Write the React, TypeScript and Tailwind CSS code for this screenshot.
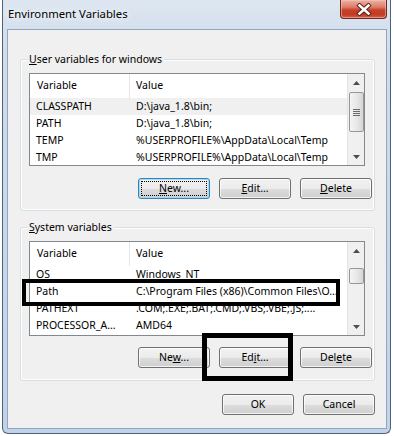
import type { ReactNode } from 'react';

type Row = { name: string; value: string };

const userRows: Row[] = [
  { name: 'CLASSPATH', value: 'D:\\java_1.8\\bin;' },
  { name: 'PATH', value: 'D:\\java_1.8\\bin;' },
  { name: 'TEMP', value: '%USERPROFILE%\\AppData\\Local\\Temp' },
  { name: 'TMP', value: '%USERPROFILE%\\AppData\\Local\\Temp' },
];

const systemRows: Row[] = [
  { name: 'OS', value: 'Windows_NT' },
  { name: 'Path', value: 'C:\\Program Files (x86)\\Common Files\\O...' },
  { name: 'PATHEXT', value: '.COM;.EXE;.BAT;.CMD;.VBS;.VBE;.JS;....' },
  { name: 'PROCESSOR_A...', value: 'AMD64' },
];

function WinButton({ children, focused }: { children: ReactNode; focused?: boolean }) {
  return (
    <div
      className={`relative flex h-[21px] w-[72px] items-center justify-center rounded-[3px] border bg-[linear-gradient(180deg,#f2f2f2_0%,#ebebeb_50%,#dddddd_51%,#cfcfcf_100%)] text-black ${
        focused
          ? 'border-[#3c7fb1] shadow-[inset_0_0_0_1px_#9fdcf7]'
          : 'border-[#707070] shadow-[inset_0_0_0_1px_rgba(255,255,255,0.75)]'
      }`}
    >
      {focused && <div className="absolute inset-[2px] border border-dotted border-black" />}
      <span className="relative">{children}</span>
    </div>
  );
}

function U({ children }: { children: ReactNode }) {
  return <span className="underline underline-offset-[1px]">{children}</span>;
}

function Arrow({ up }: { up?: boolean }) {
  return (
    <div className="flex h-[17px] items-center justify-center">
      <svg width="7" height="4" viewBox="0 0 7 4">
        <path d={up ? 'M0 4 L3.5 0 L7 4 Z' : 'M0 0 L3.5 4 L7 0 Z'} fill="#4d4d4d" />
      </svg>
    </div>
  );
}

function ScrollBar({ thumbClass, grip }: { thumbClass: string; grip?: boolean }) {
  return (
    <div className="flex w-[17px] flex-col border-l border-[#e3e3e3] bg-[#f0f0f0]">
      <Arrow up />
      <div className="flex-1">
        <div
          className={`mx-auto flex w-[15px] items-center justify-center rounded-[2px] border border-[#979797] bg-gradient-to-r from-[#f4f4f4] via-[#e8e8e8] to-[#d6d6d6] ${thumbClass}`}
        >
          {grip && (
            <div className="flex flex-col gap-[1px]">
              <div className="h-[1px] w-[7px] bg-[#6b6b6b]" />
              <div className="h-[1px] w-[7px] bg-[#6b6b6b]" />
              <div className="h-[1px] w-[7px] bg-[#6b6b6b]" />
              <div className="h-[1px] w-[7px] bg-[#6b6b6b]" />
            </div>
          )}
        </div>
      </div>
      <Arrow />
    </div>
  );
}

function ListView({
  rows,
  selected,
  heightClass,
  thumbClass,
  grip,
}: {
  rows: Row[];
  selected?: number;
  heightClass: string;
  thumbClass: string;
  grip?: boolean;
}) {
  return (
    <div className={`flex w-[336px] overflow-hidden border border-[#828790] bg-white ${heightClass}`}>
      <div className="flex-1 overflow-hidden">
        <div className="flex h-[24px] items-center">
          <div className="flex h-full w-[100px] items-center border-r border-[#e5e5e5] pl-[7px]">Variable</div>
          <div className="pl-[6px]">Value</div>
        </div>
        {rows.map((row, i) => (
          <div
            key={row.name}
            className={`flex h-[17px] items-center whitespace-nowrap ${i === selected ? 'bg-[#f0f0f0]' : ''}`}
          >
            <div className="w-[100px] overflow-hidden pl-[6px]">{row.name}</div>
            <div className="flex-1 overflow-hidden pl-[6px]">{row.value}</div>
          </div>
        ))}
      </div>
      <ScrollBar thumbClass={thumbClass} grip={grip} />
    </div>
  );
}

function GroupBox({ label, children, className }: { label: ReactNode; children: ReactNode; className?: string }) {
  return (
    <div className={`relative rounded-[3px] border border-[#d5dfe5] pl-[8px] pt-[13px] shadow-[inset_0_0_0_1px_#ffffff] ${className ?? ''}`}>
      <div className="absolute -top-[8px] left-[6px] bg-[#f0f0f0] px-[2px] leading-[14px]">{label}</div>
      {children}
    </div>
  );
}

export default function App() {
  return (
    <div className="relative h-[436px] w-[394px] overflow-hidden bg-white font-['Noto_Sans',sans-serif] text-[10.5px] text-black">
      <div className="ml-[2px] h-[434px] w-[389px] rounded-b-[6px] border-x border-b border-[#4f6177] bg-[linear-gradient(180deg,#dde6f0_0%,#cfdcec_12%,#c6d7eb_60%,#c0d3e9_100%)]">
        <div className="flex h-[29px] items-start justify-between">
          <div className="pl-[5px] pt-[6px] text-[11.3px] leading-[16px] [text-shadow:0_0_6px_#ffffff,0_0_10px_#ffffff]">
            Environment Variables
          </div>
          <div className="mr-[3px] flex h-[19px] w-[47px] items-center justify-center rounded-b-[4px] border border-t-0 border-[#6a2a22] bg-[linear-gradient(180deg,#ebb2a4_0%,#dc7d68_40%,#c7412a_55%,#c23b23_80%,#d4654b_100%)] shadow-[inset_0_0_0_1px_rgba(255,200,190,0.5)]">
            <svg width="16" height="13" viewBox="0 0 16 13">
              <path d="M3.5 2.5 L12.5 10.5 M12.5 2.5 L3.5 10.5" stroke="#5a1e15" strokeWidth="4.4" strokeLinecap="square" />
              <path d="M3.5 2.5 L12.5 10.5 M12.5 2.5 L3.5 10.5" stroke="#ffffff" strokeWidth="2.6" strokeLinecap="square" />
            </svg>
          </div>
        </div>
        <div className="ml-[4px] flex h-[400px] w-[380px] flex-col border border-[#93a6bd] bg-[#f0f0f0] pl-[12px] pr-[11px] pt-[29px]">
          <GroupBox label={<><U>U</U>ser variables for windows</>} className="pb-[11px]">
            <ListView rows={userRows} selected={0} heightClass="h-[93px]" thumbClass="mt-[1px] h-[40px]" grip />
            <div className="mt-[12px] flex justify-end gap-[9px] pr-[2px]">
              <WinButton focused>
                <U>N</U>ew...
              </WinButton>
              <WinButton>
                <U>E</U>dit...
              </WinButton>
              <WinButton>
                <U>D</U>elete
              </WinButton>
            </div>
          </GroupBox>
          <GroupBox label={<><U>S</U>ystem variables</>} className="mt-[16px] pb-[12px]">
            <ListView rows={systemRows} heightClass="h-[95px]" thumbClass="mt-[9px] h-[16px]" />
            <div className="mt-[11px] flex justify-end gap-[9px] pr-[2px]">
              <WinButton>
                Ne<U>w</U>...
              </WinButton>
              <WinButton>
                Ed<U>i</U>t...
              </WinButton>
              <WinButton>
                Del<U>e</U>te
              </WinButton>
            </div>
          </GroupBox>
          <div className="mt-[13px] flex justify-end gap-[9px]">
            <WinButton>OK</WinButton>
            <WinButton>Cancel</WinButton>
          </div>
        </div>
      </div>
      <div className="absolute left-[22px] top-[279px] h-[27px] w-[318px] border-4 border-black" />
      <div className="absolute left-[202px] top-[333px] h-[48px] w-[91px] border-[5px] border-black" />
    </div>
  );
}
